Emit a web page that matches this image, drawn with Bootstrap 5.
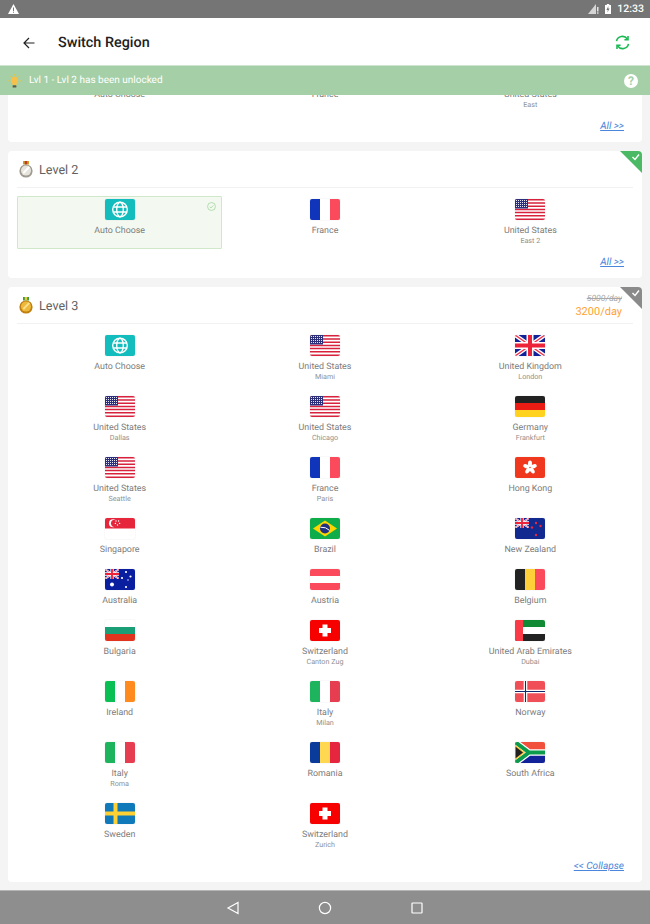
<!DOCTYPE html>
<html lang="en">
<head>
    <meta charset="UTF-8">
    <meta name="viewport" content="width=device-width, initial-scale=1.0">
    <title>Switch Region</title>
    <link href="https://cdn.jsdelivr.net/npm/bootstrap@5.3.0/dist/css/bootstrap.min.css" rel="stylesheet">
    <style>
        html, body { height: 924px; overflow: hidden; }
        body {
            background: #f4f4f4;
            font-family: Roboto, "Liberation Sans", sans-serif;
            text-rendering: geometricPrecision;
        }
        .status-strip { height: 18px; background: #757575; color: #fff; font-size: 10.5px; font-weight: 500; padding: 0 6px 0 8px; }
        .status-right { gap: 6px; }
        .top-head { height: 47px; background: #fff; padding: 2px 20px 0 23px; }
        .top-title { margin-left: 23px; font-size: 14.4px; font-weight: 500; color: #212121; }
        .unlock-bar { height: 30px; background: #a5cfa7; border-top: 1px solid #cfe3d0; color: #fff; font-size: 10px; padding: 0 12px 0 8px; position: relative; z-index: 2; }
        .unlock-text { margin-left: 8px; }
        .help-dot { width: 14px; height: 14px; border-radius: 50%; background: #fff; color: #a5cfa7; font-size: 12px; font-weight: 700; line-height: 14px; text-align: center; }
        .scroll-pane { height: 795px; overflow: hidden; padding: 0 8px; }
        .scroll-pane .level-box:first-child { margin-top: -43px; }
        .level-box { position: relative; background: #fff; border-radius: 4px; margin-bottom: 9px; padding: 0 9px 10px; overflow: hidden; }
        .level-head { height: 37px; border-bottom: 1px solid #f1f1f1; padding: 0 11px 0 2px; }
        .level-name { margin: 5px 0 0 6px; font-size: 12.6px; color: #616161; }
        .price-box { align-self: flex-start; margin-top: 7px; }
        .price-old { font-size: 8.6px; font-style: italic; color: #a8a8a8; text-decoration: line-through; line-height: 11px; }
        .price-new { font-size: 11px; color: #ffa233; line-height: 13px; }
        .corner-tag { position: absolute; top: 0; right: 0; width: 22px; height: 22px; }
        .region-grid { display: grid; grid-template-columns: repeat(3, 1fr); align-items: start; margin-top: 8px; }
        .region-cell { border: 1px solid transparent; border-radius: 1px; padding: 2px 0 10px; text-align: center; position: relative; }
        .region-cell.picked { background: #f3f9f1; border-color: #cfe8c9; padding-bottom: 12px; }
        .picked-mark { position: absolute; top: 5px; right: 5px; }
        .flag-pic { display: block; width: 30px; height: 21px; margin: 0 auto 5px; border-radius: 2px; box-shadow: 0 0 1px rgba(0,0,0,.25); }
        .region-name { font-size: 8.9px; line-height: 12px; margin-bottom: -1px; color: #7c7c7c; }
        .region-sub { font-size: 7.2px; line-height: 10px; color: #8f8f8f; }
        .more-link { height: 11px; padding-right: 9px; font-size: 10.1px; line-height: 11px; font-style: italic; text-align: right; }
        .more-link a { color: #4a86dc; }
        .nav-strip { height: 34px; background: #8e8e8e; border-top: 1px solid #b5b5b5; gap: 66px; }
    </style>
</head>
<body>

<!-- flag symbols -->
<svg width="0" height="0" class="position-absolute">
    <defs>
        <symbol id="f-jack" viewBox="0 0 30 21">
            <rect width="30" height="21" fill="#12239a"/>
            <path d="M0 0L30 21M30 0L0 21" stroke="#fff" stroke-width="4"/>
            <path d="M0 0L30 21M30 0L0 21" stroke="#f0304a" stroke-width="1.4"/>
            <path d="M15 0V21M0 10.5H30" stroke="#fff" stroke-width="7"/>
            <path d="M15 0V21M0 10.5H30" stroke="#ec2339" stroke-width="4"/>
        </symbol>
        <symbol id="f-auto" viewBox="0 0 30 21">
            <rect width="30" height="21" fill="#13bdbd"/>
            <g fill="none" stroke="#fff" stroke-width="1.4">
                <circle cx="15" cy="10.5" r="7.3"/>
                <ellipse cx="15" cy="10.5" rx="3.3" ry="7.3"/>
                <path d="M8 8H22M8 13H22"/>
            </g>
        </symbol>
        <symbol id="f-us" viewBox="0 0 30 21">
            <rect width="30" height="21" fill="#fff"/>
            <path d="M0 .8H30M0 4H30M0 7.2H30M0 10.4H30M0 13.6H30M0 16.8H30M0 20.2H30" stroke="#d8213d" stroke-width="1.5"/>
            <rect width="13" height="9.5" fill="#2c2f7c"/>
            <path d="M1 1.5H12M1 3.5H12M1 5.5H12M1 7.5H12" stroke="#e6e6f4" stroke-width="1" stroke-dasharray="1 1"/>
        </symbol>
        <symbol id="f-fr" viewBox="0 0 30 21">
            <rect width="10" height="21" fill="#1035bb"/><rect x="10" width="10" height="21" fill="#fff"/><rect x="20" width="10" height="21" fill="#fb4a5b"/>
        </symbol>
        <symbol id="f-gb" viewBox="0 0 30 21"><use href="#f-jack"/></symbol>
        <symbol id="f-de" viewBox="0 0 30 21">
            <rect width="30" height="7" fill="#222"/><rect y="7" width="30" height="7" fill="#ea1c14"/><rect y="14" width="30" height="7" fill="#ffd21f"/>
        </symbol>
        <symbol id="f-hk" viewBox="0 0 30 21">
            <rect width="30" height="21" fill="#f0381f"/>
            <g fill="#fff" transform="translate(15 10.5)">
                <ellipse cy="-3.8" rx="2" ry="3.2"/>
                <ellipse cy="-3.8" rx="2" ry="3.2" transform="rotate(72)"/>
                <ellipse cy="-3.8" rx="2" ry="3.2" transform="rotate(144)"/>
                <ellipse cy="-3.8" rx="2" ry="3.2" transform="rotate(216)"/>
                <ellipse cy="-3.8" rx="2" ry="3.2" transform="rotate(288)"/>
            </g>
        </symbol>
        <symbol id="f-sg" viewBox="0 0 30 21">
            <rect width="30" height="21" fill="#fff"/><rect width="30" height="10.5" fill="#e6263a"/>
            <circle cx="8" cy="5.3" r="4" fill="#fff"/><circle cx="9.6" cy="5.3" r="3.6" fill="#e6263a"/>
            <g fill="#fff"><circle cx="11" cy="3" r=".7"/><circle cx="13.6" cy="3" r=".7"/><circle cx="14.6" cy="5.4" r=".7"/><circle cx="10.4" cy="5.4" r=".7"/><circle cx="12.5" cy="7" r=".7"/></g>
        </symbol>
        <symbol id="f-br" viewBox="0 0 30 21">
            <rect width="30" height="21" fill="#0fad4a"/>
            <path d="M15 2.5L27 10.5L15 18.5L3 10.5Z" fill="#ffd500"/>
            <circle cx="15" cy="10.5" r="5" fill="#21307f"/>
            <path d="M10.4 9.2Q16 8.8 19.6 12.4" fill="none" stroke="#fff" stroke-width="1"/>
        </symbol>
        <symbol id="f-nz" viewBox="0 0 30 21">
            <rect width="30" height="21" fill="#12298f"/>
            <svg width="14" height="10" viewBox="0 0 30 21"><use href="#f-jack" width="30" height="21"/></svg>
            <g fill="#e8283c"><circle cx="21" cy="5" r="1.2"/><circle cx="17" cy="9.5" r="1.2"/><circle cx="25.5" cy="8" r="1.2"/><circle cx="21" cy="17" r="1.2"/></g>
        </symbol>
        <symbol id="f-au" viewBox="0 0 30 21">
            <rect width="30" height="21" fill="#0a1fa0"/>
            <svg width="14" height="10" viewBox="0 0 30 21"><use href="#f-jack" width="30" height="21"/></svg>
            <g fill="#fff"><circle cx="7" cy="15.5" r="2"/><circle cx="21" cy="3" r="1.1"/><circle cx="17" cy="9" r="1.1"/><circle cx="25.5" cy="7.5" r="1.1"/><circle cx="23" cy="11" r=".7"/><circle cx="21" cy="18" r="1.1"/></g>
        </symbol>
        <symbol id="f-at" viewBox="0 0 30 21">
            <rect width="30" height="21" fill="#fff"/><rect width="30" height="7" fill="#fb4a5b"/><rect y="14" width="30" height="7" fill="#fb4a5b"/>
        </symbol>
        <symbol id="f-be" viewBox="0 0 30 21">
            <rect width="10" height="21" fill="#222"/><rect x="10" width="10" height="21" fill="#ffcf3a"/><rect x="20" width="10" height="21" fill="#fb4a5b"/>
        </symbol>
        <symbol id="f-bg" viewBox="0 0 30 21">
            <rect width="30" height="7" fill="#fff"/><rect y="7" width="30" height="7" fill="#1a9e75"/><rect y="14" width="30" height="7" fill="#e1341e"/>
        </symbol>
        <symbol id="f-ch" viewBox="0 0 30 21">
            <rect width="30" height="21" fill="#f70000"/><path d="M12.5 4.5h5v3.5h3.5v5h-3.5v3.5h-5v-3.5H9v-5h3.5z" fill="#fff"/>
        </symbol>
        <symbol id="f-ae" viewBox="0 0 30 21">
            <rect y="0" width="30" height="7" fill="#118a36"/><rect y="7" width="30" height="7" fill="#fff"/><rect y="14" width="30" height="7" fill="#222"/><rect width="8" height="21" fill="#fb3a48"/>
        </symbol>
        <symbol id="f-ie" viewBox="0 0 30 21">
            <rect width="10" height="21" fill="#0abf53"/><rect x="10" width="10" height="21" fill="#fff"/><rect x="20" width="10" height="21" fill="#ff8a1e"/>
        </symbol>
        <symbol id="f-it" viewBox="0 0 30 21">
            <rect width="10" height="21" fill="#1eb45e"/><rect x="10" width="10" height="21" fill="#fff"/><rect x="20" width="10" height="21" fill="#e63e50"/>
        </symbol>
        <symbol id="f-no" viewBox="0 0 30 21">
            <rect width="30" height="21" fill="#f14f58"/>
            <path d="M10.5 0V21M0 10.5H30" stroke="#fff" stroke-width="3.6"/>
            <path d="M10.5 0V21M0 10.5H30" stroke="#14286e" stroke-width="1.1"/>
        </symbol>
        <symbol id="f-ro" viewBox="0 0 30 21">
            <rect width="10" height="21" fill="#0a3a9a"/><rect x="10" width="10" height="21" fill="#ffd750"/><rect x="20" width="10" height="21" fill="#e6253e"/>
        </symbol>
        <symbol id="f-za" viewBox="0 0 30 21">
            <rect width="30" height="10.5" fill="#f0503c"/><rect y="10.5" width="30" height="10.5" fill="#12239a"/>
            <path d="M0 0L14 10.5L0 21M14 10.5H30" fill="none" stroke="#fff" stroke-width="6.5"/>
            <path d="M0 0L14 10.5L0 21M14 10.5H30" fill="none" stroke="#0c9a4c" stroke-width="4"/>
            <path d="M0 3.5L9 10.5L0 17.5Z" fill="#222" stroke="#ffc72c" stroke-width="1.2"/>
        </symbol>
        <symbol id="f-se" viewBox="0 0 30 21">
            <rect width="30" height="21" fill="#0f79b9"/><path d="M10.5 0V21M0 10.5H30" stroke="#ffd034" stroke-width="4"/>
        </symbol>
        <symbol id="medal-silver" viewBox="0 0 14 17">
            <rect x="4" y="0" width="6" height="3.5" fill="#c9a227"/><rect x="5.8" y="0" width="2.4" height="3.5" fill="#c0392b"/>
            <circle cx="7" cy="10" r="6.6" fill="#a09b90"/><circle cx="7" cy="9.6" r="5" fill="#e6e4dd"/>
            <path d="M3.6 11.5L9.5 5.2L11 6.6L5 12.8Z" fill="#fff"/>
        </symbol>
        <symbol id="medal-gold" viewBox="0 0 14 17">
            <rect x="4" y="0" width="6" height="3.5" fill="#3c9a3f"/><rect x="5.8" y="0" width="2.4" height="3.5" fill="#e9c63b"/>
            <circle cx="7" cy="10" r="6.6" fill="#c07f12"/><circle cx="7" cy="9.6" r="5" fill="#eeb93a"/>
            <path d="M3.6 11.5L9.5 5.2L11 6.6L5 12.8Z" fill="#f9e08b"/>
        </symbol>
    </defs>
</svg>

<div class="status-strip d-flex align-items-center">
    <svg width="11" height="10" viewBox="0 0 11 10"><path d="M5.5 0L11 10H0Z" fill="#fff"/><rect x="5" y="3.5" width="1" height="3.5" fill="#757575"/><rect x="5" y="7.7" width="1" height="1" fill="#757575"/></svg>
    <div class="status-right ms-auto d-flex align-items-center">
        <svg width="11" height="10" viewBox="0 0 11 10"><path d="M8 0V10H0Z" fill="#d5d5d5"/><rect x="9.2" y="3" width="1.2" height="4.5" fill="#fff"/><rect x="9.2" y="8.3" width="1.2" height="1.4" fill="#fff"/></svg>
        <svg width="6" height="10" viewBox="0 0 6 10"><path d="M0 1H1.8V0H4.2V1H6V10H0Z" fill="#fff"/><path d="M3.4 2L1.4 6H2.8L2.4 8.6L4.6 4.6H3.2Z" fill="#757575"/></svg>
        <span>12:33</span>
    </div>
</div>

<header class="top-head d-flex align-items-center">
    <svg width="12" height="12" viewBox="0 0 12 12"><path d="M11.5 6H1M6 1L1 6L6 11" fill="none" stroke="#212121" stroke-width="1.2"/></svg>
    <span class="top-title">Switch Region</span>
    <svg class="ms-auto" width="15" height="15" viewBox="0 0 15 15" fill="none" stroke="#1db954" stroke-width="1.6">
        <path d="M1.5 6.2A6 6 0 0 1 12.3 4"/><path d="M13 1V4.7H9.4"/>
        <path d="M13.5 8.8A6 6 0 0 1 2.7 11"/><path d="M2 14V10.3H5.6"/>
    </svg>
</header>

<div class="unlock-bar d-flex align-items-center">
    <svg width="13" height="14" viewBox="0 0 13 14">
        <g stroke="#f4c430" stroke-width=".8"><path d="M6.5 0V1.4M1.6 1.8L2.6 2.8M11.4 1.8L10.4 2.8M0 6.8H1.4M13 6.8H11.6"/></g>
        <path d="M6.5 2.4A4 4 0 0 0 4.4 9.6V11H8.6V9.6A4 4 0 0 0 6.5 2.4Z" fill="#f6c04a"/>
        <rect x="4.6" y="11.2" width="3.8" height="2.4" rx=".7" fill="#5d5d4a"/>
    </svg>
    <span class="unlock-text">Lvl 1 - Lvl 2 has been unlocked</span>
    <span class="help-dot ms-auto">?</span>
</div>

<main class="scroll-pane" id="levels"></main>

<nav class="nav-strip d-flex align-items-center justify-content-center">
    <svg width="26" height="14" viewBox="0 0 26 14"><path d="M18 1.5V12.5L8 7Z" fill="none" stroke="#fff" stroke-width="1.2"/></svg>
    <svg width="26" height="14" viewBox="0 0 26 14"><circle cx="13" cy="7" r="5.6" fill="none" stroke="#fff" stroke-width="1.2"/></svg>
    <svg width="26" height="14" viewBox="0 0 26 14"><rect x="8" y="2" width="10" height="10" rx=".5" fill="none" stroke="#fff" stroke-width="1.2"/></svg>
</nav>

<script>
    // first box is scrolled under the banner, only its lower part shows
    const levels = [
        { link: "All >>", regions: [
            ["auto", "Auto Choose"], ["fr", "France"], ["us", "United States", "East"]
        ]},
        { name: "Level 2", medal: "medal-silver", link: "All >>", tag: "#4cb964", regions: [
            ["auto", "Auto Choose", "", true], ["fr", "France"], ["us", "United States", "East 2"]
        ]},
        { name: "Level 3", medal: "medal-gold", link: "<< Collapse", tag: "#8a8a8a", price: true, regions: [
            ["auto", "Auto Choose"], ["us", "United States", "Miami"], ["gb", "United Kingdom", "London"],
            ["us", "United States", "Dallas"], ["us", "United States", "Chicago"], ["de", "Germany", "Frankfurt"],
            ["us", "United States", "Seattle"], ["fr", "France", "Paris"], ["hk", "Hong Kong"],
            ["sg", "Singapore"], ["br", "Brazil"], ["nz", "New Zealand"],
            ["au", "Australia"], ["at", "Austria"], ["be", "Belgium"],
            ["bg", "Bulgaria"], ["ch", "Switzerland", "Canton Zug"], ["ae", "United Arab Emirates", "Dubai"],
            ["ie", "Ireland"], ["it", "Italy", "Milan"], ["no", "Norway"],
            ["it", "Italy", "Roma"], ["ro", "Romania"], ["za", "South Africa"],
            ["se", "Sweden"], ["ch", "Switzerland", "Zurich"]
        ]}
    ];

    function regionCell(r) {
        let mark = r[3] ? `<svg class="picked-mark" width="9" height="9" viewBox="0 0 10 10" fill="none" stroke="#a5d6a0" stroke-width=".9"><circle cx="5" cy="5" r="4.4"/><path d="M3 5.2L4.5 6.6L7 3.8"/></svg>` : "";
        let sub = r[2] ? `<div class="region-sub">${r[2]}</div>` : "";
        return `<div class="region-cell ${r[3] ? "picked" : ""}">${mark}
            <svg class="flag-pic" viewBox="0 0 30 21"><use href="#f-${r[0]}"/></svg>
            <div class="region-name">${r[1]}</div>${sub}</div>`;
    }

    document.getElementById("levels").innerHTML = levels.map(l => {
        let safeLink = l.link.replace(/</g, "&lt;").replace(/>/g, "&gt;");
        let price = l.price ? `<div class="price-box ms-auto text-end"><div class="price-old">5000/day</div><div class="price-new">3200/day</div></div>` : "";
        let tag = l.tag ? `<svg class="corner-tag" viewBox="0 0 22 22"><path d="M0 0H22V22Z" fill="${l.tag}"/><path d="M12.5 6L15 8.5L19 3.5" fill="none" stroke="#fff" stroke-width="1.4"/></svg>` : "";
        let head = l.name ? `<div class="level-head d-flex align-items-center">
                <svg width="14" height="17" viewBox="0 0 14 17"><use href="#${l.medal}"/></svg>
                <span class="level-name">${l.name}</span>${price}
            </div>` : "";
        return `<section class="level-box">${tag}${head}
            <div class="region-grid">${l.regions.map(regionCell).join("")}</div>
            <div class="more-link"><a href="#">${safeLink}</a></div>
        </section>`;
    }).join("");
</script>

<script src="https://cdn.jsdelivr.net/npm/bootstrap@5.3.0/dist/js/bootstrap.bundle.min.js"></script>
</body>
</html>
